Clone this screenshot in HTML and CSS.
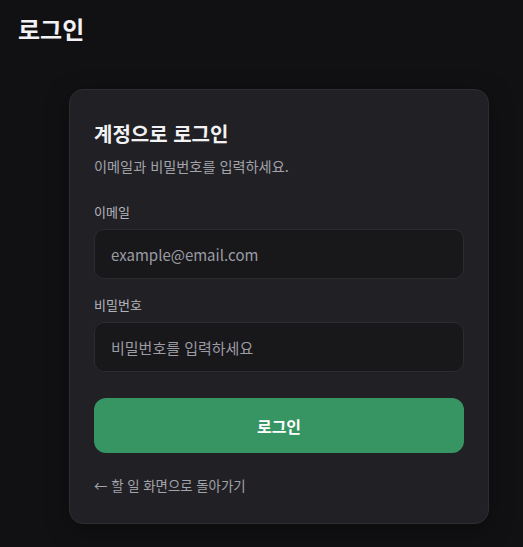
FILE: index.html
```html
<!DOCTYPE html>
<html lang="ko">
<head>
  <meta charset="UTF-8">
  <title>로그인</title>
  <link rel="stylesheet" href="styles.css">
</head>
<body>

  <h1 class="page-title">로그인</h1>

  <!-- 로그인 카드 -->
  <div class="login-card">
    <h2 class="card-title">계정으로 로그인</h2>
    <p class="card-desc">이메일과 비밀번호를 입력하세요.</p>

    <label class="field-label" for="email">이메일</label>
    <input class="field-input" type="email" id="email" placeholder="example@email.com">

    <label class="field-label" for="password">비밀번호</label>
    <input class="field-input" type="password" id="password" placeholder="비밀번호를 입력하세요">

    <button class="login-btn">로그인</button>

    <a class="back-link" href="#">← 할 일 화면으로 돌아가기</a>
  </div>

</body>
</html>
```

FILE: styles.css
```css
* {
  box-sizing: border-box;
}

body {
  margin: 0;
  padding: 14px 18px 24px;
  background: #111113;
  font-family: "Noto Sans CJK KR", "Noto Sans", sans-serif;
  color: #f2f2f4;
}

.page-title {
  margin: 0;
  font-size: 24px;
  line-height: 30px;
  font-weight: 700;
}

.login-card {
  width: 420px;
  margin: 45px 0 0 51px;
  padding: 29px 24px 28px;
  background: #212125;
  border: 1px solid #2d2d32;
  border-radius: 14px;
  box-shadow: 0 6px 24px rgba(0, 0, 0, 0.35);
  display: flex;
  flex-direction: column;
}

.card-title {
  margin: 0;
  font-size: 20px;
  line-height: 30px;
  font-weight: 700;
}

.card-desc {
  margin: 6px 0 0;
  font-size: 14.2px;
  line-height: 22px;
  color: #a3a3ab;
}

.field-label {
  margin-top: 25px;
  font-size: 13px;
  line-height: 20px;
  color: #b4b4bb;
}

.field-input + .field-label {
  margin-top: 16px;
}

.field-input {
  margin-top: 7px;
  height: 50px;
  padding: 0 16px;
  background: #18181b;
  border: 1px solid #2b2b30;
  border-radius: 10px;
  font-family: inherit;
  font-size: 15px;
  color: #f2f2f4;
  outline: none;
}

.field-input::placeholder {
  color: #9c9ca4;
}

.login-btn {
  margin-top: 26px;
  height: 55px;
  background: #379463;
  color: #ffffff;
  border: none;
  border-radius: 12px;
  font-family: inherit;
  font-size: 16px;
  font-weight: 700;
  cursor: pointer;
}

.login-btn:hover {
  background: #2f8556;
}

.back-link {
  margin-top: 22px;
  font-size: 13.4px;
  line-height: 20px;
  color: #a3a3ab;
  text-decoration: none;
}
```
